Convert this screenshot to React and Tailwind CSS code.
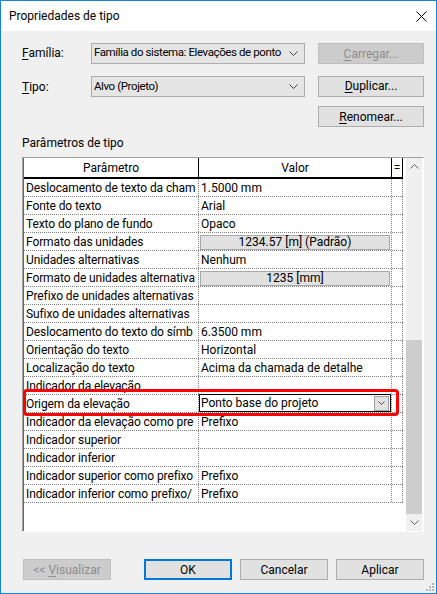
// Caixa de diálogo "Propriedades de tipo"
const linhas = [
    { nome: "Deslocamento de texto da cham", valor: "1.5000 mm" },
    { nome: "Fonte do texto", valor: "Arial" },
    { nome: "Texto do plano de fundo", valor: "Opaco" },
    { nome: "Formato das unidades", valor: "1234.57 [m] (Padrão)", tipo: "botao" },
    { nome: "Unidades alternativas", valor: "Nenhum" },
    { nome: "Formato de unidades alternativa", valor: "1235 [mm]", tipo: "botao" },
    { nome: "Prefixo de unidades alternativas", valor: "" },
    { nome: "Sufixo de unidades alternativas", valor: "" },
    { nome: "Deslocamento do texto do símb", valor: "6.3500 mm" },
    { nome: "Orientação do texto", valor: "Horizontal" },
    { nome: "Localização do texto", valor: "Acima da chamada de detalhe" },
    { nome: "Indicador da elevação", valor: "" },
    { nome: "Origem da elevação", valor: "Ponto base do projeto", tipo: "lista" },
    { nome: "Indicador da elevação como pre", valor: "Prefixo" },
    { nome: "Indicador superior", valor: "" },
    { nome: "Indicador inferior", valor: "" },
    { nome: "Indicador superior como prefixo", valor: "Prefixo" },
    { nome: "Indicador inferior como prefixo/", valor: "Prefixo" },
];

const Chevron = ({ up = false, color = "#404040" }) => (
    <svg width="9" height="5" viewBox="0 0 9 5" aria-hidden="true">
        <polyline
            points={up ? "0.5,4.5 4.5,0.5 8.5,4.5" : "0.5,0.5 4.5,4.5 8.5,0.5"}
            fill="none"
            stroke={color}
            strokeWidth="1"
        />
    </svg>
);

const Combo = ({ children }) => (
    <div className="w-[214px] h-[21px] flex items-center border border-[#acacac] bg-[#e5e5e5] pl-[2px] pr-[6px] whitespace-nowrap">
        <span className="flex-1 text-[11.5px] tracking-[-0.4px]">{children}</span>
        <span className="ml-[2px] flex">
            <Chevron />
        </span>
    </div>
);

const Botao = ({ children, disabled = false, padrao = false, largura = "w-[106px]" }) => (
    <div
        className={
            disabled
                ? `${largura} h-[21px] flex items-center justify-center border border-[#bfbfbf] bg-[#cccccc] text-[#8d8d8d]`
                : padrao
                ? `${largura} h-[21px] flex items-center justify-center border-2 border-[#0078d7] bg-[#e1e1e1]`
                : `${largura} h-[21px] flex items-center justify-center border border-[#adadad] bg-[#e1e1e1]`
        }
    >
        {children}
    </div>
);

const Valor = ({ linha }) => {
    if (linha.tipo === "botao") {
        return (
            <div className="ml-[1px] mt-[1px] w-[190px] h-[15px] flex items-center justify-center border border-[#a9a9a9] bg-[#e1e1e1] leading-none">
                {linha.valor}
            </div>
        );
    }
    if (linha.tipo === "lista") {
        return (
            <div className="-mt-[1px] w-[192px] h-[18px] flex items-center border border-black bg-white pl-[1px]">
                <span className="flex-1">{linha.valor}</span>
                <div className="w-[15px] h-[15px] mr-[1px] flex items-center justify-center border border-[#a0a0a0] bg-[#e1e1e1]">
                    <svg width="7" height="4" viewBox="0 0 7 4" aria-hidden="true">
                        <polyline points="0.5,0.5 3.5,3.5 6.5,0.5" fill="none" stroke="#505050" strokeWidth="1" />
                    </svg>
                </div>
            </div>
        );
    }
    return <span className="pl-[2px]">{linha.valor}</span>;
};

export default function App() {
    return (
        <div className="relative w-[437px] h-[594px] overflow-hidden border border-[#1883d7] bg-[#f0f0f0] flex flex-col font-['Roboto',sans-serif] text-[12px] text-black">
            {/* Barra de título */}
            <div className="h-[30px] shrink-0 bg-white flex items-center justify-between pl-[8px] pr-[9px]">
                <span>Propriedades de tipo</span>
                <svg width="11" height="11" viewBox="0 0 11 11" aria-hidden="true">
                    <path d="M0.5 0.5 L10.5 10.5 M10.5 0.5 L0.5 10.5" stroke="#000" strokeWidth="1" />
                </svg>
            </div>

            <div className="flex flex-col pl-[21px] pr-[12px]">
                {/* Família */}
                <div className="mt-[11px] flex items-center">
                    <span className="w-[69px]">
                        <span className="underline underline-offset-2">F</span>amília:
                    </span>
                    <Combo>Família do sistema: Elevações de ponto</Combo>
                    <div className="ml-[13px] mt-[1px]">
                        <Botao disabled>
                            <span className="underline underline-offset-2">C</span>arregar...
                        </Botao>
                    </div>
                </div>

                {/* Tipo */}
                <div className="mt-[12px] flex items-center">
                    <span className="w-[69px]">
                        <span className="underline underline-offset-2">T</span>ipo:
                    </span>
                    <Combo>Alvo (Projeto)</Combo>
                    <div className="ml-[13px] -mt-[1px]">
                        <Botao>
                            <span className="underline underline-offset-2">D</span>uplicar...
                        </Botao>
                    </div>
                </div>

                <div className="mt-[9px] flex justify-end">
                    <Botao>
                        <span className="underline underline-offset-2">R</span>enomear...
                    </Botao>
                </div>

                <div className="mt-[8px] leading-[16px]">Parâmetros de tipo</div>

                {/* Tabela de parâmetros */}
                <div className="mt-[6px] h-[375px] w-full flex border border-t-[#a0a0a0] border-l-[#a0a0a0] border-r-white border-b-white bg-white">
                    <div className="w-[380px] flex flex-col border-l border-[#696969]">
                        <div className="h-[21px] flex border-b-2 border-black">
                            <div className="w-[175px] flex items-center justify-center border-r border-black">Parâmetro</div>
                            <div className="w-[193px] flex items-center justify-center border-r border-black">Valor</div>
                            <div className="w-[11px] flex items-center justify-center border-r border-black">=</div>
                        </div>
                        {linhas.map((linha) => (
                            <div key={linha.nome} className="relative h-[18px] flex border-b border-dotted border-[#808080]">
                                <div className="w-[175px] flex items-center pl-[2px] overflow-hidden whitespace-nowrap tracking-[-0.1px] border-r border-dotted border-[#808080]">
                                    {linha.nome}
                                </div>
                                <div className="w-[193px] flex items-center overflow-visible whitespace-nowrap border-r border-dotted border-[#808080]">
                                    <Valor linha={linha} />
                                </div>
                                <div className="w-[11px] border-r border-dotted border-[#808080]" />
                                {linha.tipo === "lista" && (
                                    <div className="absolute -top-[6px] -left-[1px] right-[4px] -bottom-[4px] z-10 border-[3px] border-[#ff0000] rounded-[4px] pointer-events-none" />
                                )}
                            </div>
                        ))}
                    </div>
                    <div className="w-[3px]" />
                    {/* Barra de rolagem */}
                    <div className="w-[16px] flex flex-col bg-[#f0f0f0]">
                        <div className="h-[17px] flex items-center justify-center">
                            <Chevron up color="#606060" />
                        </div>
                        <div className="h-[165px]" />
                        <div className="flex-1 bg-[#cdcdcd]" />
                        <div className="h-[17px] flex items-center justify-center">
                            <Chevron color="#606060" />
                        </div>
                    </div>
                    <div className="flex-1" />
                </div>

                {/* Botões inferiores */}
                <div className="mt-[27px] flex items-center pl-[1px]">
                    <Botao disabled largura="w-[88px]">
                        &lt;&lt;&nbsp;<span className="underline underline-offset-2">V</span>isualizar
                    </Botao>
                    <div className="ml-auto flex gap-[8px]">
                        <Botao padrao largura="w-[88px]">OK</Botao>
                        <Botao largura="w-[88px]">Cancelar</Botao>
                        <Botao largura="w-[88px]">Aplicar</Botao>
                    </div>
                </div>
            </div>

            {/* Alça de redimensionamento */}
            <div className="absolute right-[2px] bottom-[2px] grid grid-cols-3 gap-[1px]">
                <span className="w-[2px] h-[2px]" />
                <span className="w-[2px] h-[2px]" />
                <span className="w-[2px] h-[2px] bg-[#b8b8b8]" />
                <span className="w-[2px] h-[2px]" />
                <span className="w-[2px] h-[2px] bg-[#b8b8b8]" />
                <span className="w-[2px] h-[2px] bg-[#b8b8b8]" />
                <span className="w-[2px] h-[2px] bg-[#b8b8b8]" />
                <span className="w-[2px] h-[2px] bg-[#b8b8b8]" />
                <span className="w-[2px] h-[2px] bg-[#b8b8b8]" />
            </div>
        </div>
    );
}
